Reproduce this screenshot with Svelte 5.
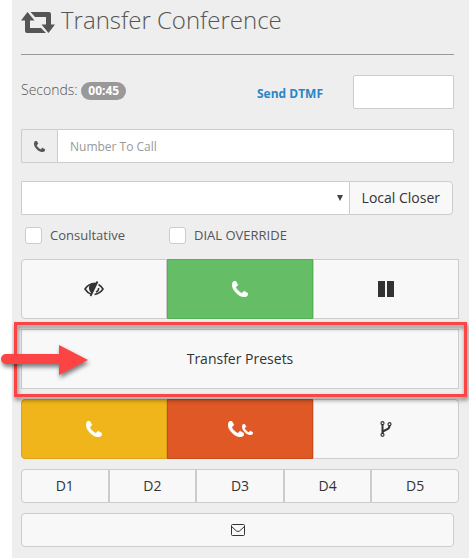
<script>
	let dtmf = $state("");
	let number = $state("");
	let closer = $state("");
	let consultative = $state(false);
	let override = $state(false);

	const presets = ["D1", "D2", "D3", "D4", "D5"];
</script>

{#snippet phone(size)}
	<svg width={size} height={size} viewBox="0 0 1408 1408" aria-hidden="true">
		<path fill="currentColor" stroke="currentColor" stroke-width="50" d="M1408 1112q0 27-10 70.500t-21 68.500q-21 50-122 106-94 51-186 51-27 0-53-3.500t-57.500-12.500-47-14.500-55.500-20.500-49-18q-98-35-175-83-127-79-264-216t-216-264q-48-77-83-175-3-9-18-49t-20.500-55.500-14.500-47-12.500-57.500-3.500-53q0-92 51-186 56-101 106-122 25-11 68.500-21t70.500-10q14 0 21 3 18 6 53 76 11 19 30 54t35 63.500 31 53.500q3 4 17.500 25t21.500 35.500 7 28.500q0 20-28.500 50t-62 55-62 53-28.500 46q0 9 5 22.500t8.500 20.500 14 24 11.500 19q76 137 174 235t235 174q2 1 19 11.500t24 14 20.500 8.500 22.500 5q18 0 46-28.500t53-62 55-62 50-28.500q14 0 28.500 7t35.500 21.500 25 17.500q25 15 53.500 31t63.500 35 54 30q70 35 76 53 3 7 3 21z" />
	</svg>
{/snippet}

<main class="panel">
	<h1>
		<svg width="34" height="22" viewBox="0 0 34 22" aria-hidden="true">
			<path fill="currentColor" d="M6.500 1 13.500 9.500H9V17h11l5 5H6q-2 0-2-2V9.500H0zM27.500 22 20.500 13.500H25V6H14L9.500 1H28q2 0 2 2v10.500h4z" />
		</svg>
		Transfer Conference
	</h1>

	<div class="row status">
		<p>Seconds: <span class="badge">00:45</span></p>
		<a href="#dtmf">Send DTMF</a>
		<input class="field dtmf" type="text" aria-label="DTMF" bind:value={dtmf}>
	</div>

	<div class="row number">
		<label class="addon" for="number" aria-label="Number To Call">{@render phone(11)}</label>
		<input class="field" id="number" type="text" placeholder="Number To Call" bind:value={number}>
	</div>

	<div class="row closer">
		<div class="select">
			<select class="field" aria-label="Closer group" bind:value={closer}>
				<option value=""></option>
			</select>
			<svg width="6" height="6" viewBox="0 0 6 6" aria-hidden="true"><path fill="#444" d="M0 0h6L3 6z" /></svg>
		</div>
		<button class="btn">Local Closer</button>
	</div>

	<div class="checks">
		<label><input type="checkbox" bind:checked={consultative}>Consultative</label>
		<label><input type="checkbox" bind:checked={override}>DIAL OVERRIDE</label>
	</div>

	<div class="group tall top">
		<button class="btn" aria-label="Hide">
			<svg width="20" height="16" viewBox="0 0 20 16" aria-hidden="true">
				<path fill="none" stroke="currentColor" stroke-width="1.600" d="M7 13Q3.500 12 1 8q3.500-5.500 10-5.500M14.500 3.500Q17 5 19 8q-3 4.500-8.500 5.500M14.500 7q.5 3-2.500 4" />
				<path fill="currentColor" d="M13 1.500 7.500 12Q4.500 9.500 5 6q.5-2.500 3-4z" />
				<path stroke="currentColor" stroke-width="1.800" d="M13.500.5 6.500 15" />
			</svg>
		</button>
		<button class="btn green" aria-label="Dial">{@render phone(16)}</button>
		<button class="btn" aria-label="Pause">
			<svg width="16" height="16" viewBox="0 0 16 16" aria-hidden="true"><path fill="currentColor" d="M0 0h7v16H0zM9 0h7v16H9z" /></svg>
		</button>
	</div>

	<div class="group tall marked">
		<button class="btn">Transfer Presets</button>
		<div class="frame"></div>
		<svg class="arrow" width="96" height="40" viewBox="0 0 96 40" aria-hidden="true">
			<path fill="#fc4444" d="M6 15h53V6l29 15-29 15V25H6a5 5 0 0 1 0-10z" />
		</svg>
	</div>

	<div class="group tall">
		<button class="btn yellow" aria-label="Hang up transfer">{@render phone(16)}</button>
		<button class="btn orange" aria-label="Hang up both lines">{@render phone(16)}{@render phone(11)}</button>
		<button class="btn" aria-label="Leave three-way call">
			<svg width="12" height="16" viewBox="0 0 12 16" aria-hidden="true">
				<g fill="none" stroke="currentColor" stroke-width="1.200">
					<circle cx="2.500" cy="2.200" r="1.500" /><circle cx="2.500" cy="13.800" r="1.500" /><circle cx="9.500" cy="3.200" r="1.500" />
					<path stroke-width="2" d="M2.500 4v8M9.500 5c0 5-7 3-7 7" />
				</g>
			</svg>
		</button>
	</div>

	<div class="group short">
		{#each presets as preset}
			<button class="btn">{preset}</button>
		{/each}
	</div>

	<div class="row">
		<button class="btn mail" aria-label="Voicemail">
			<svg width="14" height="12" viewBox="0 0 14 12" aria-hidden="true">
				<path fill="none" stroke="currentColor" d="M1.500.5h11q1 0 1 1v9q0 1-1 1h-11q-1 0-1-1v-9q0-1 1-1zM.5 2.500 5.500 7Q7 8 8.500 7l5-4.500" />
			</svg>
		</button>
	</div>
</main>

<style>
	:global(body) {
		margin: 0;
		background: #fff;
	}

	.panel {
		box-sizing: border-box;
		margin-left: 12px;
		padding: 0 10px 11px 9px;
		background: #eee;
		color: #555;
		font: 14px/20px "Open Sans", sans-serif;
		overflow: visible;
		display: flow-root;
	}

	h1 {
		display: flex;
		align-items: flex-end;
		gap: 6px;
		margin: 0 5px 20px 0;
		padding: 7px 0 21px;
		border-bottom: 1px solid #999;
		font-size: 24px;
		font-weight: 300;
		line-height: 26px;
	}

	.row {
		display: flex;
		margin-right: 5px;
	}

	.field {
		box-sizing: border-box;
		height: 34px;
		min-width: 0;
		margin: 0;
		padding: 6px 12px;
		border: 1px solid #ccc;
		border-radius: 2px;
		background: #fff;
		color: #555;
		font: 12px/20px "Open Sans", sans-serif;
		appearance: none;
	}

	.field::placeholder {
		color: #999;
		opacity: 1;
	}

	.status {
		margin-bottom: 20px;
	}

	.status p {
		flex: 1;
		margin: 5px 0 0;
		font-weight: 300;
	}

	.badge {
		display: inline-block;
		padding: 0 7px;
		border-radius: 9px;
		background: #999;
		color: #fff;
		font-size: 12px;
		font-weight: 700;
		line-height: 18px;
	}

	.status a {
		margin: 9px 30px 0 0;
		color: #2a85c4;
		font-size: 12px;
		font-weight: 700;
		text-decoration: none;
	}

	.dtmf {
		width: 101px;
	}

	.number {
		margin-bottom: 18px;
	}

	.addon {
		display: flex;
		box-sizing: border-box;
		align-items: center;
		justify-content: center;
		width: 36px;
		border: 1px solid #ccc;
		border-right: 0;
		border-radius: 2px 0 0 2px;
	}

	.number .field {
		flex: 1;
		border-radius: 0 2px 2px 0;
	}

	.select {
		position: relative;
		flex: 1;
	}

	.select .field {
		width: 100%;
		border-right: 0;
		border-radius: 2px 0 0 2px;
	}

	.select svg {
		position: absolute;
		top: 14px;
		right: 6px;
		pointer-events: none;
	}

	.btn {
		display: flex;
		box-sizing: border-box;
		align-items: center;
		justify-content: center;
		margin: 0;
		padding: 6px 12px;
		border: 1px solid #ccc;
		background: #f8f8f8;
		color: #333;
		font: 14px/20px "Open Sans", sans-serif;
	}

	.closer {
		margin-right: 6px;
	}

	.closer .btn {
		border-radius: 0 4px 4px 0;
	}

	.checks {
		display: flex;
		gap: 44px;
		height: 24px;
		margin: 8px 4px 12px;
		font-size: 13px;
	}

	.checks label {
		display: flex;
		align-items: center;
		gap: 8px;
	}

	.checks input {
		width: 17px;
		height: 17px;
		margin: 0;
		border: 1px solid #ccc;
		border-radius: 3px;
		background: #fff;
		appearance: none;
	}

	.checks input:checked {
		background: #2a85c4;
	}

	.group {
		display: flex;
		margin-bottom: 10px;
	}

	.group .btn {
		flex: 1;
	}

	.group .btn:first-child {
		border-radius: 4px 0 0 4px;
	}

	.group .btn:last-child {
		border-radius: 0 4px 4px 0;
	}

	.group.top .btn:last-child {
		border-radius: 0;
	}

	.tall .btn {
		height: 60px;
	}

	.short .btn {
		height: 34px;
	}

	.group .green {
		border-color: #52b152;
		background: #65bd65;
		color: #fff;
	}

	.group .yellow {
		border-color: #dca316;
		background: #f0b51a;
		color: #fff;
	}

	.group .orange {
		border-color: #c94a1c;
		background: #df5826;
		color: #fff;
	}

	.orange :global(svg + svg) {
		margin-left: -2px;
	}

	.marked {
		position: relative;
	}

	.group.marked .btn {
		border-radius: 0;
	}

	.frame {
		position: absolute;
		inset: -7px -8px -8px -7px;
		border: 3px solid #fc4444;
		filter: drop-shadow(1px 3px 2px rgba(0, 0, 0, 0.5));
		pointer-events: none;
	}

	.arrow {
		position: absolute;
		top: 10px;
		left: -21px;
		filter: drop-shadow(1px 3px 2px rgba(0, 0, 0, 0.5));
		pointer-events: none;
	}

	.mail {
		flex: 1;
		height: 34px;
		border-radius: 4px;
	}
</style>
